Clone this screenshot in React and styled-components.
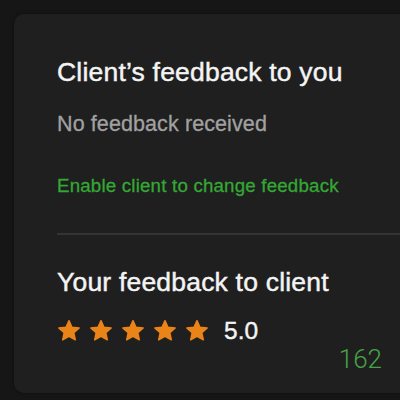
import React from "react";
import styled, { createGlobalStyle } from "styled-components";

const GlobalStyle = createGlobalStyle`
  html, body {
    margin: 0;
    padding: 0;
    background: #161616;
    overflow: hidden;
  }
  body {
    font-family: "Liberation Sans", Arial, sans-serif;
    -webkit-font-smoothing: antialiased;
  }
`;

const Page = styled.div`
  width: 400px;
  height: 400px;
  padding: 14px 0 0 14px;
  box-sizing: border-box;
  overflow: hidden;
`;

const Card = styled.section`
  width: 430px;
  height: 379px;
  box-sizing: border-box;
  background: #1f1f1f;
  border-radius: 10px;
  padding: 45px 0 0 43px;
  box-shadow: 0 0 4px rgba(0, 0, 0, 0.35);
`;

const Title = styled.h2`
  margin: 0;
  font-size: 26.5px;
  line-height: 1;
  font-weight: 400;
  letter-spacing: 0.2px;
  color: #f4f4f4;
  -webkit-text-stroke: 0.45px #f4f4f4;
  margin-top: ${(p) => p.$top || 0}px;
`;

const Muted = styled.p`
  margin: 28px 0 0;
  font-size: 21.5px;
  line-height: 1;
  letter-spacing: 0.1px;
  color: #a1a1a1;
  -webkit-text-stroke: 0.3px #a1a1a1;
`;

const ActionLink = styled.a`
  display: block;
  margin-top: 42px;
  font-size: 18.7px;
  line-height: 1;
  letter-spacing: 0.2px;
  color: #34a834;
  -webkit-text-stroke: 0.3px #34a834;
  text-decoration: none;
  cursor: pointer;
`;

const Divider = styled.hr`
  margin: 37px 0 0;
  border: 0;
  height: 2px;
  background: #333333;
`;

const RatingRow = styled.div`
  display: flex;
  align-items: center;
  gap: 8px;
  margin-top: 24px;
  height: 24px;
`;

const Score = styled.span`
  margin-left: 7px;
  font-size: 24.5px;
  line-height: 1;
  color: #f4f4f4;
  -webkit-text-stroke: 0.4px #f4f4f4;
`;

const Counter = styled.div`
  margin-top: 3px;
  padding-right: 62px;
  text-align: right;
  font-family: Roboto, "Open Sans", sans-serif;
  font-weight: 300;
  font-size: 26px;
  line-height: 1;
  color: #45a445;
`;

function Star() {
  return (
    <svg width="24" height="24" viewBox="0 0 24 24">
      <path
        d="M12 1.6l3.05 6.6 7.15.8-5.3 4.85 1.45 7.05L12 17.3l-6.35 3.6 1.45-7.05L1.8 9l7.15-.8z"
        fill="#ea8418"
        stroke="#ea8418"
        strokeWidth="1.4"
        strokeLinejoin="round"
      />
    </svg>
  );
}

export default function App() {
  return (
    <>
      <GlobalStyle />
      <Page>
        <Card>
          <Title>Client’s feedback to you</Title>
          <Muted>No feedback received</Muted>
          <ActionLink>Enable client to change feedback</ActionLink>
          <Divider />
          <Title $top={34}>Your feedback to client</Title>
          <RatingRow>
            {[0, 1, 2, 3, 4].map((i) => (
              <Star key={i} />
            ))}
            <Score>5.0</Score>
          </RatingRow>
          <Counter>162</Counter>
        </Card>
      </Page>
    </>
  );
}
